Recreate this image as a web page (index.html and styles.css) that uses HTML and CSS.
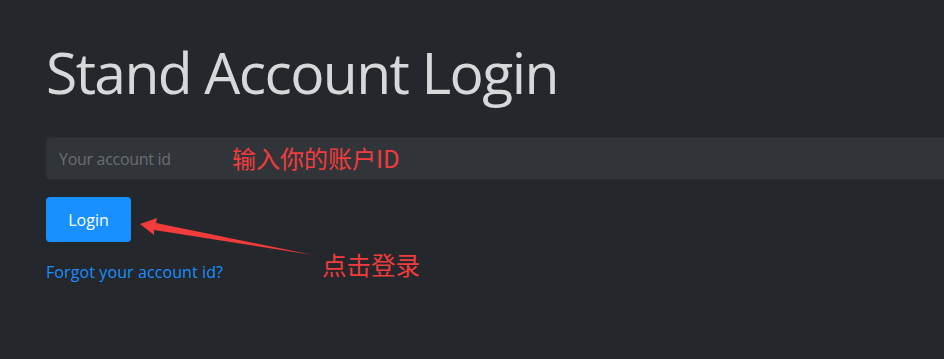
FILE: index.html
```html
<!DOCTYPE html>
<html lang="en">
<head>
<meta charset="utf-8">
<title>Stand Account Login</title>
<link rel="stylesheet" href="styles.css">
</head>
<body>
<main class="page">
  <h1 class="title">Stand Account Login</h1>
  <form class="login-form">
    <div class="field">
      <input class="input" type="text" placeholder="Your account id">
      <span class="note note-input">输入你的账户ID</span>
    </div>
    <div class="actions">
      <button class="btn" type="button">Login</button>
      <svg class="arrow" width="190" height="50" viewBox="0 0 190 50" aria-hidden="true">
        <polygon points="0,10 17,4 16,9 173,41 14,16 14,21" fill="#f23c3c"/>
      </svg>
    </div>
    <div class="links">
      <a class="link" href="#">Forgot your account id?</a>
      <span class="note note-login">点击登录</span>
    </div>
  </form>
</main>
</body>
</html>
```

FILE: styles.css
```css
html, body {
  margin: 0;
  padding: 0;
  background: #24272c;
  overflow: hidden;
}
body {
  font-family: "Open Sans", "Noto Sans", "Noto Sans CJK SC", sans-serif;
  color: #d6d7d9;
}
.page {
  padding: 38px 0 0 46px;
}
.title {
  margin: 0;
  font-size: 57px;
  font-weight: 400;
  line-height: 1.2;
  color: #d7d8da;
  letter-spacing: -1.6px;
}
.login-form {
  margin-top: 31px;
  margin-right: -10px;
}
.field {
  position: relative;
}
.input {
  box-sizing: border-box;
  display: block;
  width: 100%;
  height: 43px;
  padding: 0 12px;
  background: #31353a;
  border: 1px solid #2b2e33;
  border-radius: 4px;
  font-family: "Open Sans", "Noto Sans", sans-serif;
  font-size: 16px;
  letter-spacing: -0.3px;
  color: #d6d7d9;
  outline: none;
}
.input::placeholder {
  color: #6a6d72;
}
.note {
  position: absolute;
  color: #f23c3c;
  font-family: "Noto Sans CJK SC", "Noto Sans", sans-serif;
  white-space: nowrap;
  line-height: 1;
}
.note-input {
  left: 186px;
  top: 9px;
  font-size: 24px;
}
.actions {
  position: relative;
  margin-top: 17px;
  height: 45px;
}
.btn {
  display: block;
  width: 85px;
  height: 45px;
  border: 0;
  border-radius: 4px;
  background: #1890ff;
  color: #ffffff;
  font-family: "Open Sans", "Noto Sans", sans-serif;
  font-size: 16px;
  padding: 0;
  cursor: pointer;
}
.arrow {
  position: absolute;
  left: 94px;
  top: 17px;
}
.links {
  position: relative;
  margin-top: 19px;
}
.link {
  color: #1890ff;
  text-decoration: none;
  font-size: 16px;
  letter-spacing: 0.1px;
}
.note-login {
  left: 276px;
  top: -8px;
  font-size: 24.5px;
}
```
